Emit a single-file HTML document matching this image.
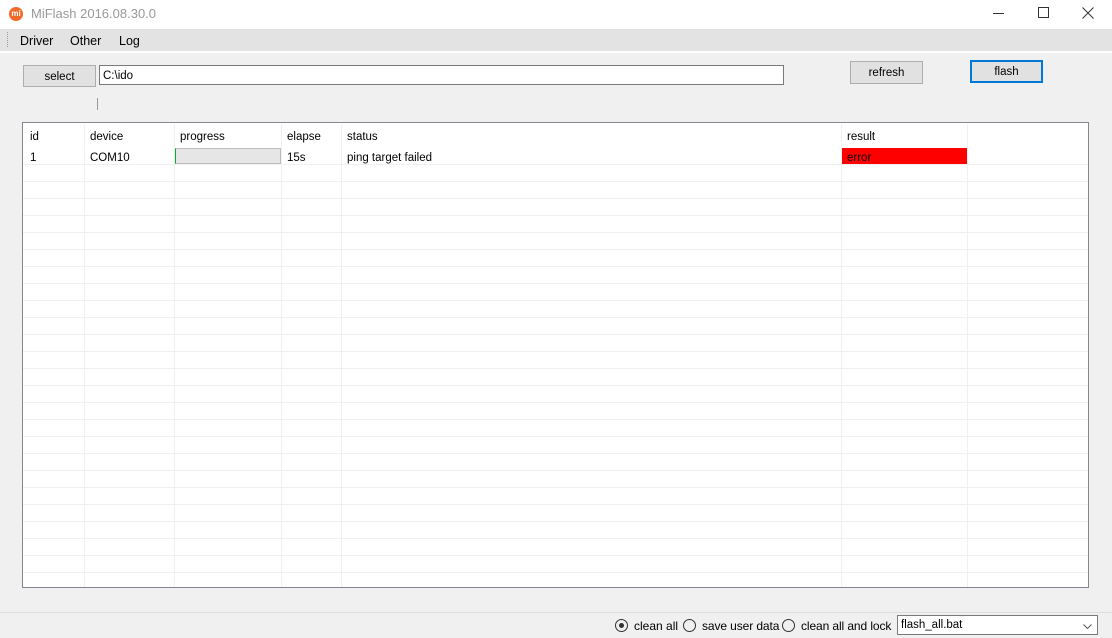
<!DOCTYPE html>
<html><head><meta charset="utf-8"><style>
*{margin:0;padding:0;box-sizing:border-box}
body{width:1112px;height:638px;background:#f0f0f0;font-family:"Liberation Sans",sans-serif;font-size:11.5px;color:#000;position:relative;overflow:hidden}
.a{position:absolute}
.btn{position:absolute;background:#e1e1e1;border:1px solid #adadad;text-align:center;line-height:22px;font-size:11.5px}
.vl{position:absolute;top:1px;bottom:0;width:1px;background:#f0f0f0}
</style></head><body>
<div class="a" style="left:0;top:0;width:1112px;height:29px;background:#fff"></div>
<div class="a" style="left:9px;top:7px;width:14px;height:14px;border-radius:50%;background:#f06a2a;color:#fff;font-size:8px;line-height:14px;text-align:center;font-weight:bold">mi</div>
<div class="a" style="left:31px;top:6px;font-size:13px;color:#999">MiFlash 2016.08.30.0</div>
<div class="a" style="left:993px;top:13px;width:11px;height:1px;background:#333"></div>
<div class="a" style="left:1038px;top:7px;width:11px;height:11px;border:1px solid #333"></div>
<svg class="a" style="left:1082px;top:7px" width="12" height="12"><path d="M0.5 0.5L11.5 11.5M11.5 0.5L0.5 11.5" stroke="#333" stroke-width="1"/></svg>
<div class="a" style="left:0;top:29px;width:1112px;height:22px;background:#e3e3e3"></div>
<div class="a" style="left:0;top:51px;width:1112px;height:2px;background:#fff"></div>
<div class="a" style="left:7px;top:32px;width:1px;height:15px;border-left:1px dotted #999"></div>
<div class="a" style="left:20px;top:34px;font-size:12.5px">Driver</div>
<div class="a" style="left:70px;top:34px;font-size:12.5px">Other</div>
<div class="a" style="left:119px;top:34px;font-size:12.5px">Log</div>
<div class="btn" style="left:23px;top:65px;width:73px;height:22px">select</div>
<div class="a" style="left:99px;top:65px;width:685px;height:20px;background:#fff;border:1px solid #7a7a7a;padding-left:3px;line-height:20px">C:\ido</div>
<div class="a" style="left:97px;top:98px;width:1px;height:12px;background:#999"></div>
<div class="btn" style="left:850px;top:61px;width:73px;height:23px">refresh</div>
<div class="btn" style="left:970px;top:60px;width:73px;height:23px;border:2px solid #0078d7;line-height:21px">flash</div>
<div class="a" style="left:22px;top:122px;width:1067px;height:466px;background:#fff;border:1px solid #828790;overflow:hidden">
 <div class="a" style="left:0;top:41px;width:1065px;height:420px;background:repeating-linear-gradient(to bottom,#f0f0f0 0,#f0f0f0 1px,transparent 1px,transparent 17px)"></div>
 <div class="vl" style="left:61px"></div><div class="vl" style="left:151px"></div><div class="vl" style="left:258px"></div><div class="vl" style="left:318px"></div><div class="vl" style="left:818px"></div><div class="vl" style="left:944px"></div>
 <div class="a" style="left:0;top:24px;width:1065px;height:1px;background:#fff"></div>
 <div class="a" style="left:7px;top:8px">id</div>
 <div class="a" style="left:67px;top:8px">device</div>
 <div class="a" style="left:157px;top:8px">progress</div>
 <div class="a" style="left:264px;top:8px">elapse</div>
 <div class="a" style="left:324px;top:8px">status</div>
 <div class="a" style="left:824px;top:8px">result</div>
 <div class="a" style="left:7px;top:29px">1</div>
 <div class="a" style="left:67px;top:29px">COM10</div>
 <div class="a" style="left:152px;top:25px;width:106px;height:16px;background:#e6e6e6;border:1px solid #bcbcbc;border-left:1px solid #06b025"></div>
 <div class="a" style="left:264px;top:29px">15s</div>
 <div class="a" style="left:324px;top:29px">ping target failed</div>
 <div class="a" style="left:819px;top:25px;width:125px;height:16px;background:#f00;padding-left:5px;padding-top:4px">error</div>
</div>
<div class="a" style="left:0;top:612px;width:1112px;height:1px;background:#ddd"></div>
<div class="a" style="left:615px;top:619px;width:13px;height:13px;border:1px solid #333;border-radius:50%"><div class="a" style="left:3px;top:3px;width:5px;height:5px;border-radius:50%;background:#333"></div></div>
<div class="a" style="left:634px;top:619px;font-size:12px">clean all</div>
<div class="a" style="left:683px;top:619px;width:13px;height:13px;border:1px solid #333;border-radius:50%"></div>
<div class="a" style="left:702px;top:619px;font-size:12px;letter-spacing:-0.1px">save user data</div>
<div class="a" style="left:782px;top:619px;width:13px;height:13px;border:1px solid #333;border-radius:50%"></div>
<div class="a" style="left:801px;top:619px;font-size:12px;letter-spacing:-0.1px">clean all and lock</div>
<div class="a" style="left:897px;top:615px;width:201px;height:20px;background:#fff;border:1px solid #7a7a7a;padding-left:3px;line-height:19px">flash_all.bat<svg style="position:absolute;right:5px;top:8px" width="9" height="5"><path d="M0.5 0.5L4.5 4.5L8.5 0.5" stroke="#555" fill="none"/></svg></div>
</body></html>
